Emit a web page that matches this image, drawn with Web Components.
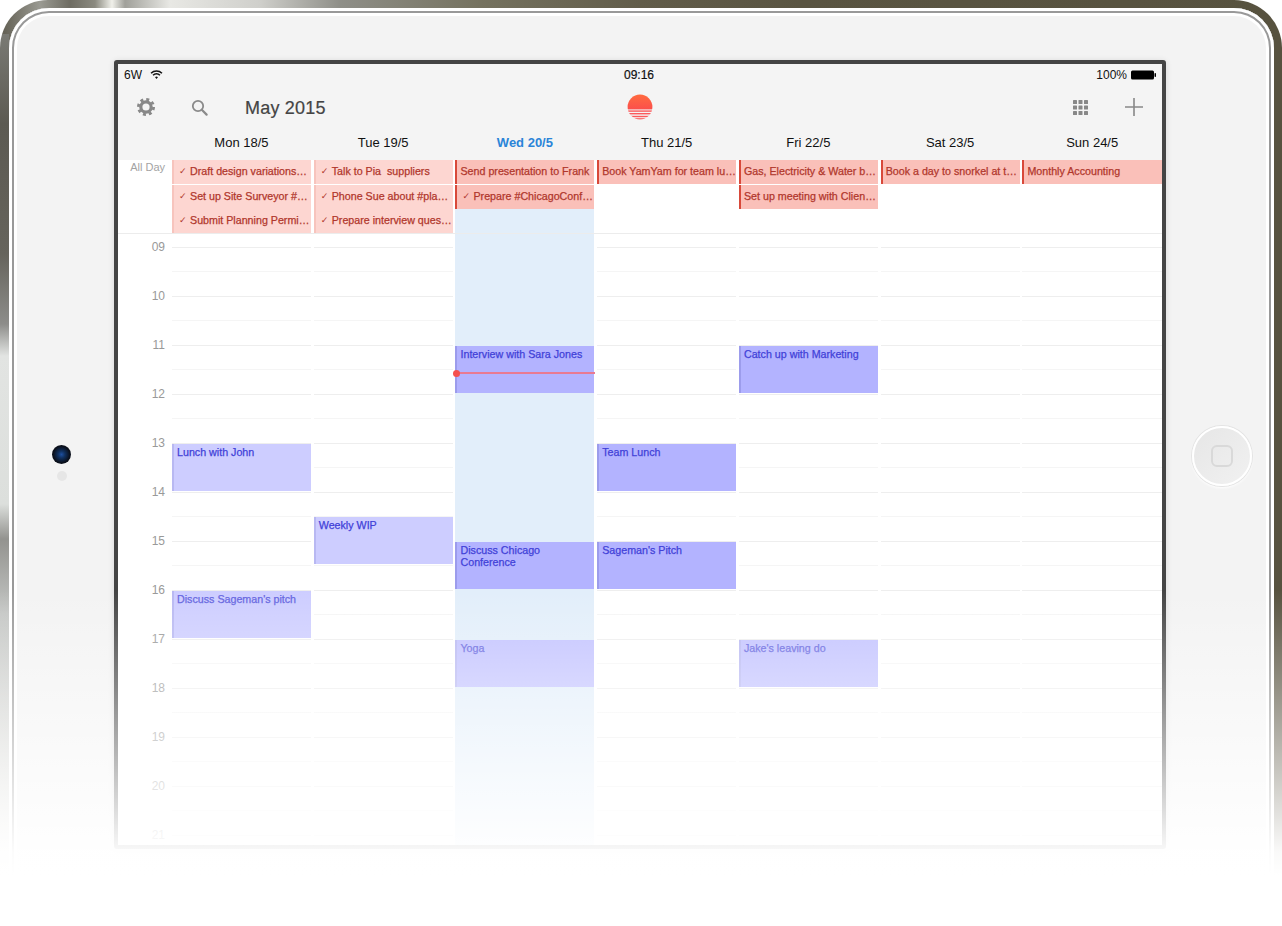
<!DOCTYPE html>
<html lang="en">
<head>
<meta charset="utf-8">
<title>Sunrise Calendar</title>
<style>
    html, body { margin: 0; padding: 0; background: #fff; }
    body { font-family: "Liberation Sans", Arial, sans-serif; overflow: hidden; }
</style>
</head>
<body>

<tablet-frame>
    <cal-status></cal-status>
    <cal-nav title-text="May 2015"></cal-nav>
    <cal-days>
        <span>Mon 18/5</span><span>Tue 19/5</span><span class="today">Wed 20/5</span><span>Thu 21/5</span><span>Fri 22/5</span><span>Sat 23/5</span><span>Sun 24/5</span>
    </cal-days>
    <all-day-row>
        <all-day-event col="1" row="1" done>Draft design variations…</all-day-event>
        <all-day-event col="1" row="2" done>Set up Site Surveyor #…</all-day-event>
        <all-day-event col="1" row="3" done>Submit Planning Permi…</all-day-event>
        <all-day-event col="2" row="1" done>Talk to Pia &nbsp;suppliers</all-day-event>
        <all-day-event col="2" row="2" done>Phone Sue about #pla…</all-day-event>
        <all-day-event col="2" row="3" done>Prepare interview ques…</all-day-event>
        <all-day-event col="3" row="1">Send presentation to Frank</all-day-event>
        <all-day-event col="3" row="2" check>Prepare #ChicagoConf…</all-day-event>
        <all-day-event col="4" row="1">Book YamYam for team lu…</all-day-event>
        <all-day-event col="5" row="1">Gas, Electricity &amp; Water b…</all-day-event>
        <all-day-event col="5" row="2">Set up meeting with Clien…</all-day-event>
        <all-day-event col="6" row="1">Book a day to snorkel at t…</all-day-event>
        <all-day-event col="7" row="1">Monthly Accounting</all-day-event>
    </all-day-row>
    <week-grid>
        <day-column>
            <cal-event time="13" light>Lunch with John</cal-event>
            <cal-event time="16" light muted>Discuss Sageman's pitch</cal-event>
        </day-column>
        <day-column>
            <cal-event time="14.5" light>Weekly WIP</cal-event>
        </day-column>
        <day-column today>
            <cal-event time="11">Interview with Sara Jones<now-line></now-line></cal-event>
            <cal-event time="15">Discuss Chicago Conference</cal-event>
            <cal-event time="17" muted>Yoga</cal-event>
        </day-column>
        <day-column>
            <cal-event time="13">Team Lunch</cal-event>
            <cal-event time="15">Sageman's Pitch</cal-event>
        </day-column>
        <day-column>
            <cal-event time="11">Catch up with Marketing</cal-event>
            <cal-event time="17" muted>Jake's leaving do</cal-event>
        </day-column>
        <day-column></day-column>
        <day-column></day-column>
    </week-grid>
</tablet-frame>

<script>
class TabletFrame extends HTMLElement
{
    constructor()
    {
        super();
        this.attachShadow({ mode: 'open' });
    }

    connectedCallback()
    {
        this.shadowRoot.innerHTML = `
      <style>
        * { box-sizing: border-box; }
        :host {
            display: block;
            position: relative;
            width: 1282px;
            height: 926px;
            overflow: hidden;
            font-family: "Liberation Sans", Arial, sans-serif;
        }
        .rim {
            height: 900px;
            padding: 8px 8px 0 9px;
            border-radius: 48px 48px 0 0;
            background:
                linear-gradient(to bottom, #7a7a74 0, #5c5a52 90px, #66645c 220px, #8d8d8a 290px, #e2e4e2 322px, #dcdfdc 470px, #93938f 505px, #c4c6c4 580px, #e0e0dc 800px) 0 34px / 9px 100% no-repeat,
                linear-gradient(to right, #5f5c50 0, #9a9a92 40px, #6e6c62 70px, #8b8a80 95px, #f0f0ea 112px, #a0a09a 125px, #e8e8e4 170px, #cfcfcb 260px, #8f8f88 340px, #75725f 480px, #625d4a 640px, #5a5542 800px, #57523f 100%);
        }
        .bezel {
            display: flex;
            height: 100%;
            padding: 52px 0 0 0;
            border-radius: 40px 40px 0 0;
            background: #f3f3f3;
            box-shadow: inset 0 0 0 3px #fff, inset 0 0 0 5px #999, inset 0 0 0 8px #fff;
        }
        .side-left {
            flex: 0 0 105px;
            display: flex;
            flex-direction: column;
            align-items: center;
            gap: 7px;
            padding: 385px 0 0 0;
        }
        .camera {
            width: 19px;
            height: 19px;
            border-radius: 50%;
            background: radial-gradient(circle at 50% 50%, #1d4fa0 0, #10305f 26%, #0a0f1a 62%);
        }
        .sensor {
            width: 10px;
            height: 10px;
            border-radius: 50%;
            background: #e6e6e6;
        }
        .screen {
            flex: 0 0 1052px;
            height: 789px;
            display: flex;
            flex-direction: column;
            border: 4px solid #444;
            border-radius: 3px;
            background: #fff;
            box-shadow: 0 1px 6px rgba(0, 0, 0, 0.12);
            overflow: hidden;
        }
        .side-right {
            flex: 0 0 auto;
            padding: 366px 0 0 26px;
        }
        .home {
            display: flex;
            align-items: center;
            justify-content: center;
            width: 60px;
            height: 60px;
            border-radius: 50%;
            border: 2px solid #fff;
            background: linear-gradient(135deg, #e6e6e6, #f1f1f1);
            box-shadow: 0 0 0 1px #e3e3e3, 0 2px 3px #fff;
        }
        .home i {
            display: block;
            width: 22px;
            height: 22px;
            border-radius: 6px;
            border: 2px solid #d9d9d9;
        }
        .fade {
            position: absolute;
            left: 0;
            right: 0;
            top: 590px;
            bottom: 0;
            pointer-events: none;
            background: linear-gradient(to bottom, rgba(255,255,255,0) 0, rgba(255,255,255,0.97) 262px, #fff 285px);
        }
      </style>
      <div class="rim">
        <div class="bezel">
            <div class="side-left"><div class="camera"></div><div class="sensor"></div></div>
            <div class="screen"><slot></slot></div>
            <div class="side-right"><div class="home"><i></i></div></div>
        </div>
      </div>
      <div class="fade"></div>
    `;
    }
}

class CalStatus extends HTMLElement
{
    constructor()
    {
        super();
        this.attachShadow({ mode: 'open' });
    }

    connectedCallback()
    {
        this.shadowRoot.innerHTML = `
      <style>
        :host {
            display: grid;
            grid-template-columns: 1fr auto 1fr;
            align-items: center;
            box-sizing: border-box;
            height: 20px;
            padding: 1px 6px 0 6px;
            background: #f4f4f4;
            color: #111;
            font-size: 12px;
            flex: none;
        }
        .left { display: flex; align-items: center; gap: 8px; }
        .right { display: flex; align-items: center; justify-content: flex-end; gap: 4px; }
        .time { margin-right: 2px; -webkit-text-stroke: 0.2px #111; }
        svg { display: block; }
      </style>
      <div class="left">6W
        <svg width="13" height="10" viewBox="0 0 14 11">
            <path d="M1 3.6 A8.6 8.6 0 0 1 13 3.6" fill="none" stroke="#111" stroke-width="1.7"/>
            <path d="M3.2 5.8 A5.4 5.4 0 0 1 10.8 5.8" fill="none" stroke="#111" stroke-width="1.7"/>
            <path d="M5.4 8 A2.4 2.4 0 0 1 8.6 8 L7 9.8 Z" fill="#111"/>
        </svg>
      </div>
      <div class="time">09:16</div>
      <div class="right">100%
        <svg width="25" height="10" viewBox="0 0 25 10">
            <rect x="0" y="0.5" width="23" height="9" rx="1.5" fill="#000"/>
            <rect x="23.5" y="3" width="1.5" height="4" rx="0.7" fill="#000"/>
        </svg>
      </div>
    `;
    }
}

class CalNav extends HTMLElement
{
    constructor()
    {
        super();
        this.attachShadow({ mode: 'open' });
    }

    connectedCallback()
    {
        this.shadowRoot.innerHTML = `
      <style>
        :host {
            display: flex;
            align-items: center;
            box-sizing: border-box;
            height: 44px;
            padding: 2px 19px 0 19px;
            background: #f4f4f4;
            flex: none;
            position: relative;
        }
        svg { display: block; flex: none; }
        .settings { margin-right: 36px; }
        .title {
            margin: 2px 0 0 37px;
            font-size: 18px;
            letter-spacing: 0.2px;
            color: #444;
            -webkit-text-stroke: 0.2px #444;
        }
        .spacer { flex: 1; }
        .logo-wrap {
            position: absolute;
            left: 509px;
            top: 10px;
        }
        .grid { margin-right: 37px; }
      </style>
      <svg class="settings" width="18" height="18" viewBox="0 0 18 18">
        <circle cx="9" cy="9" r="5.2" fill="none" stroke="#888" stroke-width="3.2"/>
        <circle cx="9" cy="9" r="7.6" fill="none" stroke="#888" stroke-width="2.8" stroke-dasharray="3 2.97"/>
      </svg>
      <svg width="17" height="17" viewBox="0 0 17 17">
        <circle cx="7" cy="7" r="5.2" fill="none" stroke="#8a8a8a" stroke-width="1.8"/>
        <path d="M10.8 10.8 L15.6 15.6" stroke="#8a8a8a" stroke-width="2.2" stroke-linecap="round"/>
      </svg>
      <div class="title">${this.getAttribute('title-text')}</div>
      <div class="logo-wrap">
        <svg width="26" height="26" viewBox="0 0 26 26">
            <defs>
                <clipPath id="sun"><circle cx="13" cy="13" r="12.4"/></clipPath>
                <linearGradient id="sunfill" x1="0" y1="0" x2="0" y2="1"><stop offset="0" stop-color="#ff6c3f"/><stop offset="1" stop-color="#fb4f4b"/></linearGradient>
            </defs>
            <g clip-path="url(#sun)">
                <rect x="0" y="0" width="26" height="15.4" fill="url(#sunfill)"/>
                <rect x="0" y="16.4" width="26" height="1.4" fill="#fb5a5c"/>
                <rect x="0" y="19" width="26" height="1.4" fill="#fb5a5c"/>
                <rect x="0" y="21.8" width="26" height="1.4" fill="#fb5a5c"/>
                <rect x="0" y="24.2" width="26" height="1.6" fill="#fb5a5c"/>
            </g>
        </svg>
      </div>
      <div class="spacer"></div>
      <svg class="grid" width="15" height="15" viewBox="0 0 15 15" fill="#888">
        <rect x="0" y="0" width="4" height="4" rx="0.6"/><rect x="5.5" y="0" width="4" height="4" rx="0.6"/><rect x="11" y="0" width="4" height="4" rx="0.6"/>
        <rect x="0" y="5.5" width="4" height="4" rx="0.6"/><rect x="5.5" y="5.5" width="4" height="4" rx="0.6"/><rect x="11" y="5.5" width="4" height="4" rx="0.6"/>
        <rect x="0" y="11" width="4" height="4" rx="0.6"/><rect x="5.5" y="11" width="4" height="4" rx="0.6"/><rect x="11" y="11" width="4" height="4" rx="0.6"/>
      </svg>
      <svg width="18" height="18" viewBox="0 0 18 18">
        <path d="M9 0 V18 M0 9 H18" stroke="#888" stroke-width="1.6"/>
      </svg>
    `;
    }
}

class CalDays extends HTMLElement
{
    constructor()
    {
        super();
        this.attachShadow({ mode: 'open' });
    }

    connectedCallback()
    {
        this.shadowRoot.innerHTML = `
      <style>
        :host {
            display: grid;
            grid-template-columns: repeat(6, 138.9px) 1fr;
            column-gap: 2.85px;
            align-items: center;
            box-sizing: border-box;
            height: 32px;
            padding: 0 0 4px 54px;
            background: #f4f4f4;
            color: #111;
            font-size: 13px;
            text-align: center;
            flex: none;
        }
        ::slotted(.today) { color: #2a84d8; font-weight: 700; }
      </style>
      <slot></slot>
    `;
    }
}

class AllDayRow extends HTMLElement
{
    constructor()
    {
        super();
        this.attachShadow({ mode: 'open' });
    }

    connectedCallback()
    {
        this.shadowRoot.innerHTML = `
      <style>
        * { box-sizing: border-box; }
        :host {
            display: flex;
            box-sizing: border-box;
            height: 74px;
            background: #fff;
            border-bottom: 1px solid #ececec;
            flex: none;
        }
        .label {
            flex: 0 0 54px;
            padding: 1px 7px 0 0;
            text-align: right;
            font-size: 11px;
            line-height: 13px;
            color: #a3a3a3;
        }
        .cells {
            flex: 1;
            min-width: 0;
            display: grid;
            grid-template-columns: repeat(6, 138.9px) minmax(0, 1fr);
            grid-template-rows: 24px 24px 24px;
            gap: 0.5px 2.85px;
        }
        .today-fill {
            grid-column: 3;
            grid-row: 3;
            background: #e2eefa;
        }
      </style>
      <div class="label">All Day</div>
      <div class="cells">
        <div class="today-fill"></div>
        <slot></slot>
      </div>
    `;
    }
}

class AllDayEvent extends HTMLElement
{
    constructor()
    {
        super();
        this.attachShadow({ mode: 'open' });
    }

    connectedCallback()
    {
        this.style.gridColumn = this.getAttribute('col');
        this.style.gridRow = this.getAttribute('row');
        const done = this.hasAttribute('done');
        const check = this.hasAttribute('check');
        this.shadowRoot.innerHTML = `
      <style>
        :host {
            display: flex;
            align-items: center;
            box-sizing: border-box;
            min-width: 0;
            padding: 0 0 2px ${done ? '5px' : '3px'};
            background: ${done ? '#fdd6d1' : '#fac0b9'};
            border-left: 2px solid ${done ? '#f7c4bd' : '#d8493a'};
            color: #b1372c;
            font-size: 10.7px;
            -webkit-text-stroke: 0.25px #b1372c;
            white-space: nowrap;
            overflow: hidden;
        }
        .tick {
            flex: none;
            width: 11px;
            margin-left: ${check ? '2px' : '0'};
            font-size: 9px;
            font-family: "DejaVu Sans", sans-serif;
            -webkit-text-stroke: 0;
        }
      </style>
      ${done || check ? '<span class="tick">✓</span>' : ''}<slot></slot>
    `;
    }
}

class WeekGrid extends HTMLElement
{
    constructor()
    {
        super();
        this.attachShadow({ mode: 'open' });
    }

    connectedCallback()
    {
        const hours = ['09','10','11','12','13','14','15','16','17','18','19','20','21'];
        this.shadowRoot.innerHTML = `
      <style>
        * { box-sizing: border-box; }
        :host {
            display: flex;
            flex: 1;
            min-height: 0;
            background: #fff;
            overflow: hidden;
        }
        .rail {
            flex: 0 0 54px;
            padding: 6px 7px 0 0;
            text-align: right;
            font-size: 12px;
            color: #999;
        }
        .rail div { height: 49px; line-height: 14px; }
        .days {
            flex: 1;
            min-width: 0;
            display: grid;
            grid-template-columns: repeat(6, 138.9px) minmax(0, 1fr);
            column-gap: 2.85px;
        }
      </style>
      <div class="rail">${hours.map(h => `<div>${h}</div>`).join('')}</div>
      <div class="days"><slot></slot></div>
    `;
    }
}

class DayColumn extends HTMLElement
{
    constructor()
    {
        super();
        this.attachShadow({ mode: 'open' });
    }

    connectedCallback()
    {
        const today = this.hasAttribute('today');
        this.shadowRoot.innerHTML = `
      <style>
        :host {
            display: grid;
            grid-template-rows: 13px repeat(26, 24.5px);
            background-color: ${today ? '#e2eefa' : 'transparent'};
            background-image: ${today ? 'none' : 'linear-gradient(to bottom, #eeeeee 0 1px, transparent 1px 24.5px, #f5f5f5 24.5px 25.5px, transparent 25.5px)'};
            background-size: 100% 49px;
            background-position: 0 13px;
            min-width: 0;
        }
      </style>
      <slot></slot>
    `;
    }
}

class CalEvent extends HTMLElement
{
    constructor()
    {
        super();
        this.attachShadow({ mode: 'open' });
    }

    connectedCallback()
    {
        const time = parseFloat(this.getAttribute('time'));
        const row = 2 + (time - 9) * 2;
        this.style.gridRow = `${row} / span 2`;
        const light = this.hasAttribute('light');
        const muted = this.hasAttribute('muted');
        const text = muted ? '#6464e0' : '#4141d8';
        const fill = light ? '#cdcdff' : (muted ? '#c2c2ff' : '#b3b3ff');
        // half hours sit on a .5px row, nudge so the box stays on whole pixels
        const gap = Number.isInteger(time) ? '1px 0' : '0.5px 0 1.5px';
        this.shadowRoot.innerHTML = `
      <style>
        :host {
            display: block;
            position: relative;
            margin: ${gap};
            padding: 2px 3px 0 3px;
            background: ${fill};
            border-left: 2px solid ${light || muted ? '#b8b8f2' : '#9c9cec'};
            color: ${text};
            font-size: 10.7px;
            line-height: 12px;
            -webkit-text-stroke: 0.25px ${text};
        }
      </style>
      <slot></slot>
    `;
    }
}

class NowLine extends HTMLElement
{
    constructor()
    {
        super();
        this.attachShadow({ mode: 'open' });
    }

    connectedCallback()
    {
        this.shadowRoot.innerHTML = `
      <style>
        :host {
            display: block;
            position: absolute;
            left: -2px;
            right: -1px;
            top: 26px;
            height: 2px;
            background: #e97a92;
        }
        i {
            position: absolute;
            left: -2.5px;
            top: -2.5px;
            width: 7px;
            height: 7px;
            border-radius: 50%;
            background: #f4504e;
        }
      </style>
      <i></i>
    `;
    }
}

window.customElements.define('tablet-frame', TabletFrame);
window.customElements.define('cal-status', CalStatus);
window.customElements.define('cal-nav', CalNav);
window.customElements.define('cal-days', CalDays);
window.customElements.define('all-day-row', AllDayRow);
window.customElements.define('all-day-event', AllDayEvent);
window.customElements.define('week-grid', WeekGrid);
window.customElements.define('day-column', DayColumn);
window.customElements.define('cal-event', CalEvent);
window.customElements.define('now-line', NowLine);
</script>
</body>
</html>
